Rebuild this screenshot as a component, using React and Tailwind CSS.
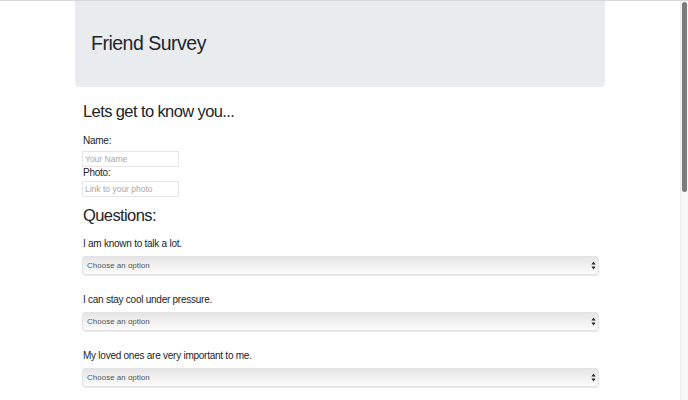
import React from "react";

const questions = [
  "I am known to talk a lot.",
  "I can stay cool under pressure.",
  "My loved ones are very important to me.",
];

const SelectBox = () => (
  <div className="relative w-[517px] ml-[-1px]">
    <select
      defaultValue=""
      className="block appearance-none w-full h-[19px] pl-[4px] text-[8px] text-[#555] rounded-[3px] border border-[#e2e2e2] bg-gradient-to-b from-[#e4e4e4] via-[#f1f1f1] to-[#fbfbfb] shadow-[0_1px_1px_rgba(0,0,0,0.08)] outline-none"
    >
      <option value="">Choose an option</option>
      <option>1 (Strongly Disagree)</option>
      <option>5 (Strongly Agree)</option>
    </select>
    {/* arrows */}
    <svg
      className="absolute right-[3px] top-[5px] pointer-events-none"
      width="5"
      height="9"
      viewBox="0 0 5 9"
    >
      <path d="M2.5 0.5 L4.5 3.5 H0.5 Z" fill="#222" />
      <path d="M2.5 8.5 L4.5 5.5 H0.5 Z" fill="#222" />
    </svg>
  </div>
);

export default function App() {
  return (
    <div
      className="w-[688px] h-[400px] overflow-hidden bg-white text-[#212529] border-t border-[#d6d6d6]"
      style={{ fontFamily: '"Liberation Sans", Arial, sans-serif' }}
    >
      <div className="flex h-full">
        <div className="flex-1">
          <div className="w-[530px] mx-auto">
            {/* Jumbotron */}
            <div className="h-[86px] bg-[#e9ecef] rounded-b-[4px] flex items-center pl-[16px]">
              <h1 className="text-[19.5px] leading-none tracking-[-0.5px]">Friend Survey</h1>
            </div>

            <div className="px-[8px]">
              <h2 className="text-[16.5px] leading-[20px] tracking-[-0.6px] mt-[14px]">Lets get to know you...</h2>

              <form className="mt-[14px]">
                <label className="block text-[10px] leading-[11px] tracking-[-0.25px]">Name:</label>
                <input
                  placeholder="Your Name"
                  className="block ml-[-1px] mt-[5px] w-[97px] h-[16px] px-[2px] text-[8.5px] border border-[#e6e6e6] placeholder:text-[#a9a9a9] outline-none"
                />
                <label className="block text-[10px] leading-[11px] tracking-[-0.25px]">Photo:</label>
                <input
                  placeholder="Link to your photo"
                  className="block ml-[-1px] mt-[3px] w-[97px] h-[16px] px-[2px] text-[8.5px] border border-[#e6e6e6] placeholder:text-[#a9a9a9] outline-none"
                />

                <h2 className="text-[16.5px] leading-[20px] tracking-[-0.6px] mt-[8px]">Questions:</h2>

                <div className="mt-[13px] flex flex-col gap-[19px]">
                  {questions.map((q) => (
                    <div key={q}>
                      <p className="text-[10px] leading-[12px] tracking-[-0.25px]">{q}</p>
                      <div className="mt-[6px]">
                        <SelectBox />
                      </div>
                    </div>
                  ))}
                </div>
              </form>
            </div>
          </div>
        </div>

        {/* scrollbar */}
        <div className="w-[8px] bg-[#f8f8f8] border-l border-[#ececec] pt-[1px]">
          <div className="ml-[1px] w-[5px] h-[190px] rounded-full bg-[#7c7c7c]" />
        </div>
      </div>
    </div>
  );
}
